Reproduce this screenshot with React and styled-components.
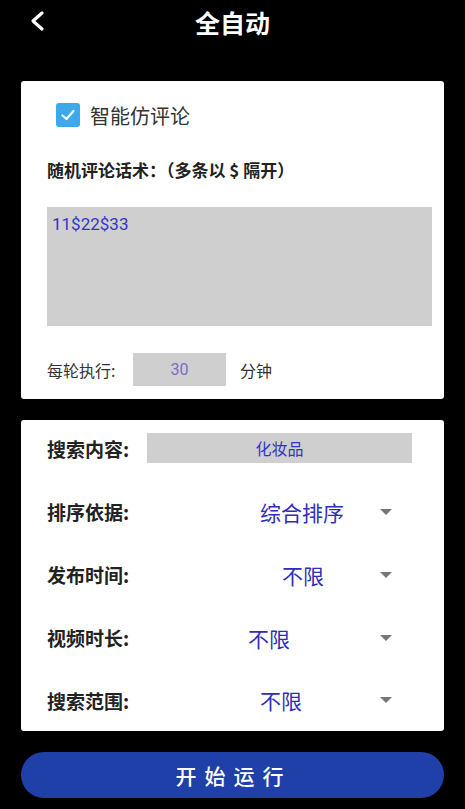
import React from 'react';
import styled, { createGlobalStyle } from 'styled-components';

const GlobalStyle = createGlobalStyle`
  html, body {
    margin: 0;
    padding: 0;
    background: #000;
  }
  body {
    font-family: "Noto Sans CJK SC", Roboto, "Noto Sans", sans-serif;
  }
`;

const Page = styled.div`
  width: 465px;
  min-height: 809px;
  background: #000;
  display: flex;
  flex-direction: column;
`;

const Header = styled.div`
  height: 44px;
  display: flex;
  align-items: center;
  justify-content: center;
  position: relative;
`;

const BackBtn = styled.div`
  position: absolute;
  left: 28px;
  top: 10px;
  width: 20px;
  height: 22px;
`;

const Title = styled.h1`
  margin: 0;
  font-size: 25px;
  font-weight: 700;
  color: #fff;
  line-height: 44px;
`;

const Card = styled.div`
  margin: ${p => p.top}px 21px 0;
  background: #fff;
  border-radius: 3px;
  display: flex;
  flex-direction: column;
  padding: ${p => p.pad};
`;

const CheckRow = styled.label`
  display: flex;
  align-items: center;
  gap: 10px;
  margin: 22px 0 0 9px;
  height: 24px;
  font-size: 20px;
  color: #333;
`;

const CheckBox = styled.span`
  width: 24px;
  height: 24px;
  border-radius: 3px;
  background: #3ba9ec;
  display: flex;
  align-items: center;
  justify-content: center;
`;

const Hint = styled.div`
  margin-top: 32px;
  font-size: 17px;
  font-weight: 700;
  color: #222;
  line-height: 22px;
`;

const TextArea = styled.div`
  margin-top: 26px;
  width: 385px;
  height: 119px;
  box-sizing: border-box;
  background: #cfcfcf;
  padding: 7px 5px;
  font-family: Roboto, "Noto Sans", sans-serif;
  font-size: 17px;
  color: #3434c8;
`;

const RoundRow = styled.div`
  margin-top: 27px;
  display: flex;
  align-items: center;
  font-size: 16px;
  color: #333;
`;

const RoundLabel = styled.span`
  width: 86px;
`;

const SmallInput = styled.div`
  width: 93px;
  height: 33px;
  margin-right: 14px;
  background: #cfcfcf;
  display: flex;
  align-items: center;
  justify-content: center;
  font-family: Roboto, "Noto Sans", sans-serif;
  font-size: 16px;
  color: #7a6cc4;
`;

const Row = styled.div`
  display: flex;
  align-items: center;
  height: ${p => p.h}px;
  margin-top: ${p => p.mt || 0}px;
`;

const Label = styled.div`
  width: 100px;
  flex-shrink: 0;
  font-size: 19px;
  font-weight: 600;
  color: #222;
`;

const SearchBox = styled.div`
  width: 265px;
  height: 30px;
  background: #cfcfcf;
  display: flex;
  align-items: center;
  justify-content: center;
  font-size: 16px;
  color: #3434c8;
`;

const Value = styled.div`
  margin-left: ${p => p.indent}px;
  font-size: 21px;
  color: #2e2eb6;
`;

const Arrow = styled.span`
  margin-left: auto;
  margin-right: 52px;
  width: 0;
  height: 0;
  border-left: 6.5px solid transparent;
  border-right: 6.5px solid transparent;
  border-top: 6px solid #777;
`;

const StartButton = styled.button`
  margin: 21px 21px 0;
  height: 46px;
  border: none;
  border-radius: 23px;
  background: #1e40a8;
  color: #fff;
  font-family: "Noto Sans CJK SC", sans-serif;
  font-size: 21px;
  font-weight: 500;
  letter-spacing: 8px;
  padding-left: 8px;
`;

const selects = [
  { label: '排序依据:', value: '综合排序', indent: 113 },
  { label: '发布时间:', value: '不限', indent: 135 },
  { label: '视频时长:', value: '不限', indent: 101 },
  { label: '搜索范围:', value: '不限', indent: 113 },
];

export default function App() {
  return (
    <Page>
      <GlobalStyle />
      <Header>
        <BackBtn>
          <svg width="20" height="22" viewBox="0 0 20 22">
            <polyline points="14,3 5,11 14,19" fill="none" stroke="#fff" strokeWidth="3.2" strokeLinecap="round" strokeLinejoin="round" />
          </svg>
        </BackBtn>
        <Title>全自动</Title>
      </Header>

      <Card top={37} pad="0 13px 13px 26px">
        <CheckRow>
          <CheckBox>
            <svg width="18" height="18" viewBox="0 0 18 18">
              <polyline points="3.5,9.5 7.5,13 14.5,5" fill="none" stroke="#fff" strokeWidth="2.2" strokeLinecap="round" strokeLinejoin="round" />
            </svg>
          </CheckBox>
          智能仿评论
        </CheckRow>
        <Hint>随机评论话术：（多条以 $ 隔开）</Hint>
        <TextArea>11$22$33</TextArea>
        <RoundRow>
          <RoundLabel>每轮执行:</RoundLabel>
          <SmallInput>30</SmallInput>
          分钟
        </RoundRow>
      </Card>

      <Card top={21} pad="13px 0 0 26px">
        <Row h={30}>
          <Label>搜索内容:</Label>
          <SearchBox>化妆品</SearchBox>
        </Row>
        {selects.map((s, i) => (
          <Row key={s.label} h={i === 3 ? 62 : 63} mt={i === 0 ? 17 : 0}>
            <Label>{s.label}</Label>
            <Value indent={s.indent}>{s.value}</Value>
            <Arrow />
          </Row>
        ))}
      </Card>

      <StartButton>开始运行</StartButton>
    </Page>
  );
}
